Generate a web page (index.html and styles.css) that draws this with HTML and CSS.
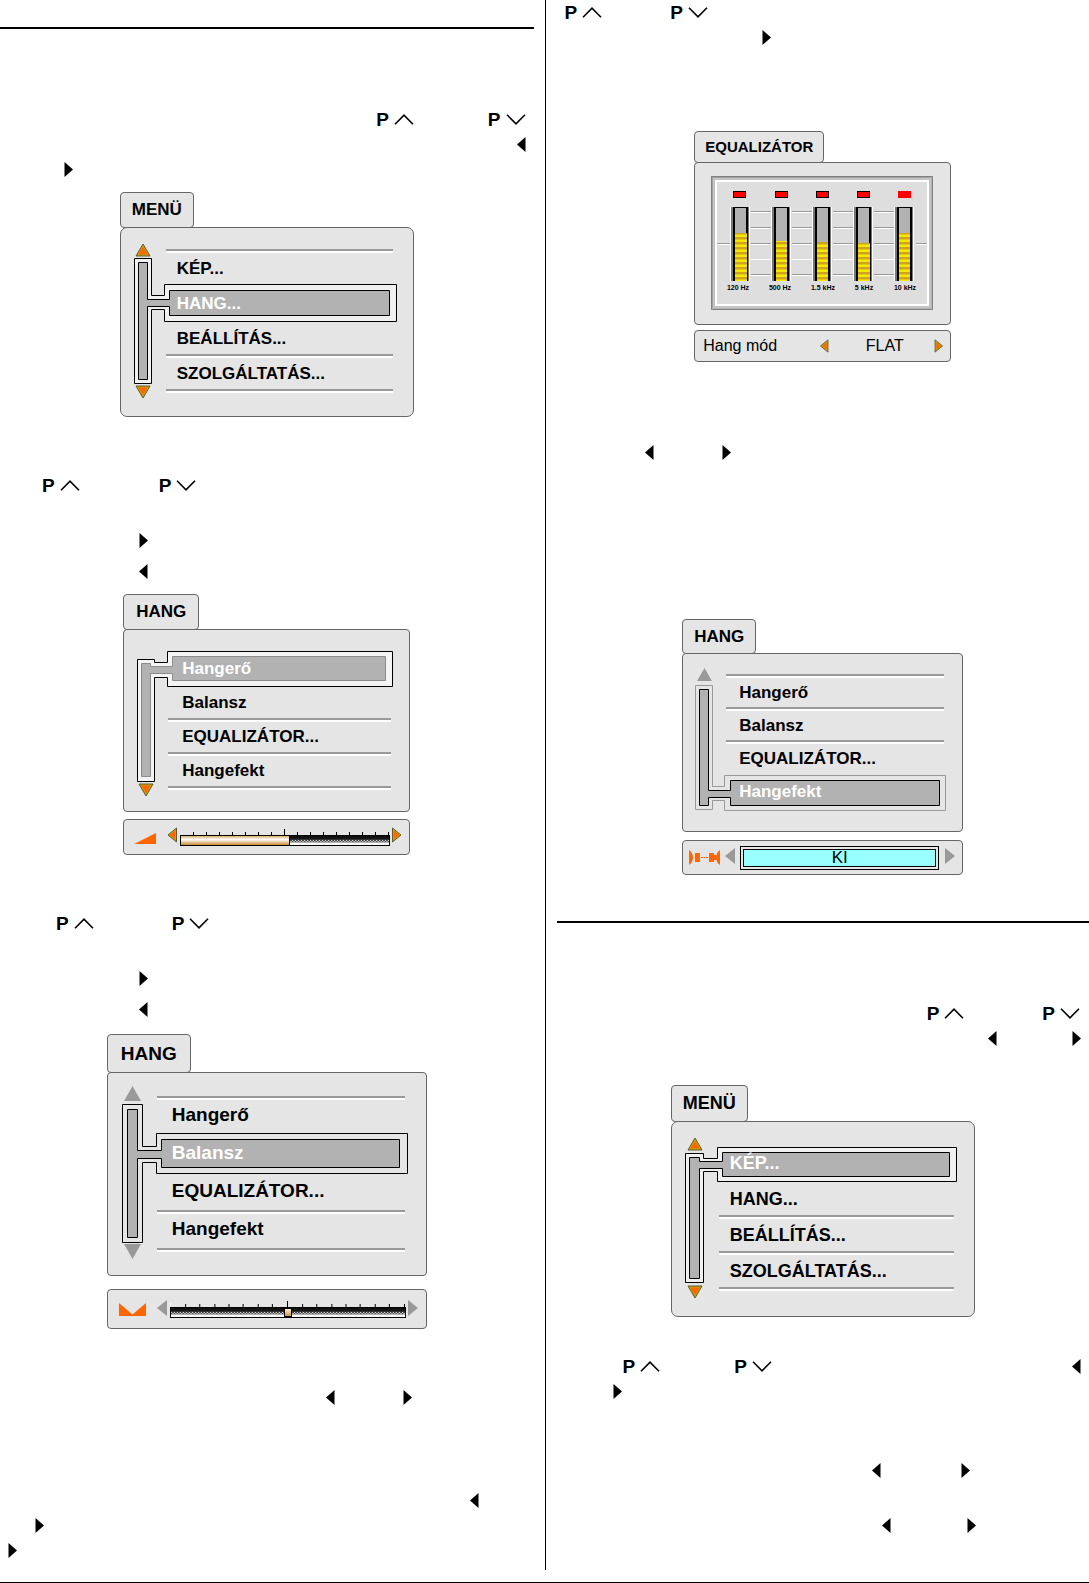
FILE: index.html
```html
<!DOCTYPE html>
<html lang="hu">
<head>
<meta charset="utf-8">
<meta name="viewport" content="width=device-width, initial-scale=1">
<title>Hang menü</title>
<link rel="stylesheet" href="styles.css">
</head>
<body>
<svg class="defs" aria-hidden="true">
  <defs>
    <symbol id="chev-up" viewBox="0 0 20 11"><path d="M1 10.300 10 1.200 19 10.300" fill="none" stroke="#000" stroke-width="1.600"/></symbol>
    <symbol id="chev-down" viewBox="0 0 20 11"><path d="M1 .8 10 9.800 19 .8" fill="none" stroke="#000" stroke-width="1.600"/></symbol>
    <symbol id="key-left" viewBox="0 0 9 15"><path d="M8.500 0V15L0 7.500Z"/></symbol>
    <symbol id="key-right" viewBox="0 0 9 15"><path d="M.5 0V15L9 7.500Z"/></symbol>
    <symbol id="up-on" viewBox="0 0 16 14"><path d="M8 1 15 13H1Z" fill="#cda000" stroke="#5c5c38"/><path d="M8 4 12.500 11.500H3.500Z" fill="#f60"/></symbol>
    <symbol id="down-on" viewBox="0 0 16 14"><path d="M8 13 15 1H1Z" fill="#cda000" stroke="#5c5c38"/><path d="M8 10 12.500 2.500H3.500Z" fill="#f60"/></symbol>
    <symbol id="up-off" viewBox="0 0 16 14"><path d="M8 0 16 14H0Z" fill="#999"/></symbol>
    <symbol id="down-off" viewBox="0 0 16 14"><path d="M8 14 16 0H0Z" fill="#999"/></symbol>
    <symbol id="left-on" viewBox="0 0 10 16"><path d="M9.500 1V15L1 8Z" fill="#cda000" stroke="#5c5c38"/><path d="M8 4V12L3 8Z" fill="#f60"/></symbol>
    <symbol id="right-on" viewBox="0 0 10 16"><path d="M.5 1V15L9 8Z" fill="#cda000" stroke="#5c5c38"/><path d="M2 4V12L7 8Z" fill="#f60"/></symbol>
    <symbol id="left-off" viewBox="0 0 10 16"><path d="M10 0V16L0 8Z" fill="#999"/></symbol>
    <symbol id="right-off" viewBox="0 0 10 16"><path d="M0 0V16L10 8Z" fill="#999"/></symbol>
    <pattern id="stripes" width="12" height="5" patternUnits="userSpaceOnUse">
      <rect width="12" height="5" fill="#f4ea00"/><rect width="12" height="2" fill="#d2a21c"/><rect y="2" width="12" height="1" fill="#e3c810"/>
    </pattern>
    <g id="meter">
      <rect x="-3" width="20" height="74" fill="#fff"/>
      <rect x="-2" width="18" height="74" fill="#777"/>
      <rect width="15" height="74" fill="#000"/>
      <rect x="2" y="1" width="11" height="73" fill="#b2b2b2"/>
    </g>
    <g id="steps">
      <path d="M0 .5H20M0 16.500H20M0 32.500H20M0 63.500H20" stroke="#999"/>
      <path d="M0 1.500H20M0 17.500H20M0 33.500H20M0 48.500H20M0 64.500H20" stroke="#fff"/>
    </g>
  </defs>
</svg>

<main class="page">
  <section class="column column--left">
    <hr class="rule rule--top">

    <div class="line line--end line--sound-menu space-xl">
      <span class="key"><b>P</b><svg><use href="#chev-up"/></svg></span>
      <span class="key"><b>P</b><svg><use href="#chev-down"/></svg></span>
    </div>
    <div class="line line--end"><svg class="tri"><use href="#key-left"/></svg></div>
    <div class="line line--sound-open"><svg class="tri"><use href="#key-right"/></svg></div>

    <figure class="osd osd--menu">
      <figcaption class="tab">MENÜ</figcaption>
      <div class="panel">
        <svg class="rail" viewBox="1 1 292 188">
          <path d="M14.500 31.500H31.500V68.500H44.500V57.500H276.500V94.500H44.500V82.500H31.500V156.500H14.500Z" fill="#f0f0f0" stroke="#000"/>
          <path d="M18.500 35.500H27.500V72.500H49.500V63.500H269.500V88.500H49.500V79.500H27.500V152.500H18.500Z" fill="#b2b2b2" stroke="#000"/>
          <use href="#up-on" x="15" y="16" width="16" height="14"/>
          <use href="#down-on" x="15" y="158" width="16" height="14"/>
        </svg>
        <ul class="items">
          <li><button>KÉP...</button></li>
          <li class="selected"><button>HANG...</button></li>
          <li><button>BEÁLLÍTÁS...</button></li>
          <li><button>SZOLGÁLTATÁS...</button></li>
        </ul>
      </div>
    </figure>

    <div class="line line--volume space-l">
      <span class="key"><b>P</b><svg><use href="#chev-up"/></svg></span>
      <span class="key"><b>P</b><svg><use href="#chev-down"/></svg></span>
    </div>
    <div class="line line--step space-m"><svg class="tri"><use href="#key-right"/></svg></div>
    <div class="line line--step space-s"><svg class="tri"><use href="#key-left"/></svg></div>

    <figure class="osd osd--volume">
      <figcaption class="tab">HANG</figcaption>
      <div class="panel">
        <svg class="rail" viewBox="1 1 285 181">
          <path d="M14.500 30.500H31.500V33.500H44.500V22.500H269.500V57.500H44.500V48.500H31.500V152.500H14.500Z" fill="#f4f4f4" stroke="#000"/>
          <path d="M18.500 34.500H27.500V37.500H49.500V27.500H262.500V51.500H49.500V44.500H27.500V147.500H18.500Z" fill="#b2b2b2" stroke="#8c8c8c"/>
          <use href="#down-on" x="15" y="154" width="16" height="14"/>
        </svg>
        <ul class="items">
          <li class="selected"><button>Hangerő</button></li>
          <li><button>Balansz</button></li>
          <li><button>EQUALIZÁTOR...</button></li>
          <li><button>Hangefekt</button></li>
        </ul>
      </div>
      <div class="bar">
        <svg class="glyph" width="23" height="16" viewBox="0 0 23 16"><path d="M0 15 22 4V15Z" fill="#f60"/></svg>
        <button class="arrow" aria-label="Halkabb"><svg><use href="#left-on"/></svg></button>
        <div class="scale">
          <svg class="ticks" viewBox="0 0 210 6" preserveAspectRatio="none"><path d="M13.500 3V6M26.500 3V6M39.500 3V6M52.500 3V6M65.500 3V6M78.500 3V6M91.500 3V6M104.500 0V6M117.500 3V6M130.500 3V6M143.500 3V6M156.500 3V6M169.500 3V6M182.500 3V6M195.500 3V6M208.500 3V6" stroke="#000"/></svg>
          <input class="level level--fill" type="range" min="0" max="100" value="52" aria-label="Hangerő">
        </div>
        <button class="arrow" aria-label="Hangosabb"><svg><use href="#right-on"/></svg></button>
      </div>
    </figure>

    <div class="line line--balance space-l">
      <span class="key"><b>P</b><svg><use href="#chev-up"/></svg></span>
      <span class="key"><b>P</b><svg><use href="#chev-down"/></svg></span>
    </div>
    <div class="line line--step space-m"><svg class="tri"><use href="#key-right"/></svg></div>
    <div class="line line--step space-s"><svg class="tri"><use href="#key-left"/></svg></div>

    <figure class="osd osd--balance">
      <figcaption class="tab">HANG</figcaption>
      <div class="panel">
        <svg class="rail" viewBox="1 1 318 202">
          <path d="M15.500 32.500H35.500V74.500H49.500V61.500H300.500V101.500H49.500V90.500H35.500V170.500H15.500Z" fill="none" stroke="#000"/>
          <path d="M20.500 37.500H30.500V78.500H54.500V67.500H292.500V95.500H54.500V86.500H30.500V165.500H20.500Z" fill="#b2b2b2" stroke="#000"/>
          <use href="#up-off" x="17" y="14" width="17" height="15"/>
          <use href="#down-off" x="17" y="172" width="17" height="15"/>
        </svg>
        <ul class="items">
          <li><button>Hangerő</button></li>
          <li class="selected"><button>Balansz</button></li>
          <li><button>EQUALIZÁTOR...</button></li>
          <li><button>Hangefekt</button></li>
        </ul>
      </div>
      <div class="bar">
        <svg class="glyph" width="28" height="16" viewBox="0 0 28 16"><path d="M0 2 13.500 13.500 27 2V15H0Z" fill="#f60"/></svg>
        <button class="arrow" aria-label="Balra"><svg><use href="#left-off"/></svg></button>
        <div class="scale">
          <svg class="ticks" viewBox="0 0 234 6" preserveAspectRatio="none"><path d="M.5 2V6" stroke="#fff"/><path d="M15.500 3V6M29.500 3V6M44.500 3V6M58.500 3V6M72.500 3V6M87.500 3V6M101.500 3V6M116.500 0V6M131.500 3V6M145.500 3V6M160.500 3V6M174.500 3V6M188.500 3V6M203.500 3V6M217.500 3V6M232.500 3V6" stroke="#000"/></svg>
          <input class="level level--knob" type="range" min="0" max="100" value="50" aria-label="Balansz">
        </div>
        <button class="arrow" aria-label="Jobbra"><svg><use href="#right-off"/></svg></button>
      </div>
    </figure>

    <div class="line line--mode space-l">
      <svg class="tri"><use href="#key-left"/></svg>
      <svg class="tri"><use href="#key-right"/></svg>
    </div>
    <div class="line line--end line--band space-xl"><svg class="tri"><use href="#key-left"/></svg></div>
    <div class="line line--band-next"><svg class="tri"><use href="#key-right"/></svg></div>
    <div class="line line--band-last"><svg class="tri"><use href="#key-right"/></svg></div>
  </section>

  <section class="column column--right">
    <div class="line line--equalizer">
      <span class="key"><b>P</b><svg><use href="#chev-up"/></svg></span>
      <span class="key"><b>P</b><svg><use href="#chev-down"/></svg></span>
    </div>
    <div class="line line--equalizer-open"><svg class="tri"><use href="#key-right"/></svg></div>

    <figure class="osd osd--equalizer">
      <figcaption class="tab">EQUALIZÁTOR</figcaption>
      <div class="panel">
        <svg class="chart" viewBox="17 14 222 134">
          <path d="M17 14H239L233 20H23V142L17 148Z" fill="#a2a2a2"/>
          <path d="M239 14V148H17L23 142H233V20Z" fill="#b4b4b4"/>
          <path d="M17.500 14.500H238.500V147.500H17.500Z" fill="none" stroke="#808080"/>
          <path d="M20 17H236V145H20Z" fill="none" stroke="#c4c4c4" stroke-width="2"/>
          <path d="M22 19H234V143H22Z" fill="#dedede" stroke="#fff" stroke-width="2"/>
          <path d="M23 81.500H36M222 81.500H233" stroke="#999"/>
          <path d="M23 82.500H36M222 82.500H233" stroke="#fff"/>
          <use href="#steps" x="57" y="49"/><use href="#steps" x="98" y="49"/><use href="#steps" x="139" y="49"/><use href="#steps" x="180" y="49"/>
          <g fill="red" stroke="#000">
            <rect x="39.500" y="29.500" width="12" height="6"/><rect x="81.500" y="29.500" width="12" height="6"/><rect x="122.500" y="29.500" width="12" height="6"/><rect x="163.500" y="29.500" width="12" height="6"/>
          </g>
          <rect x="204" y="29" width="13" height="7" fill="red"/>
          <use href="#meter" x="39" y="45"/><use href="#meter" x="80" y="45"/><use href="#meter" x="121" y="45"/><use href="#meter" x="162" y="45"/><use href="#meter" x="203" y="45"/>
          <g fill="url(#stripes)">
            <rect x="41" y="71" width="12" height="48"/><rect x="82" y="79" width="11" height="40"/><rect x="123" y="80" width="11" height="39"/><rect x="164" y="81" width="12" height="38"/><rect x="205" y="71" width="11" height="48"/>
          </g>
          <g class="bands">
            <text x="44" y="128">120 Hz</text><text x="86" y="128">500 Hz</text><text x="129" y="128">1.5 kHz</text><text x="170" y="128">5 kHz</text><text x="211" y="128">10 kHz</text>
          </g>
        </svg>
      </div>
      <div class="bar">
        <span class="bar-label">Hang mód</span>
        <button class="arrow" aria-label="Előző mód"><svg><use href="#left-on"/></svg></button>
        <output class="mode">FLAT</output>
        <button class="arrow" aria-label="Következő mód"><svg><use href="#right-on"/></svg></button>
      </div>
    </figure>

    <div class="line line--effect space-xl">
      <svg class="tri"><use href="#key-left"/></svg>
      <svg class="tri"><use href="#key-right"/></svg>
    </div>

    <figure class="osd osd--effect">
      <figcaption class="tab">HANG</figcaption>
      <div class="panel">
        <svg class="rail" viewBox="1 1 279 177">
          <path d="M13.500 32.500H30.500V133.500H42.500V122.500H263.500V157.500H42.500V147.500H30.500V156.500H13.500Z" fill="none" stroke="#999"/>
          <path d="M17.500 36.500H26.500V137.500H48.500V127.500H257.500V152.500H48.500V144.500H26.500V152.500H17.500Z" fill="#b2b2b2" stroke="#000"/>
          <use href="#up-off" x="15" y="15" width="15" height="13"/>
        </svg>
        <ul class="items">
          <li><button>Hangerő</button></li>
          <li><button>Balansz</button></li>
          <li><button>EQUALIZÁTOR...</button></li>
          <li class="selected"><button>Hangefekt</button></li>
        </ul>
      </div>
      <div class="bar">
        <svg class="glyph" width="31" height="15" viewBox="0 0 31 15"><path d="M0 0Q4 3 4 7.500T0 15ZM31 0Q27 3 27 7.500T31 15ZM6 3H11V12H6ZM20 3H25V12H20ZM12 7H14V8H12ZM15 7H16V8H15ZM17 7H19V8H17ZM25 5H27V10H25Z" fill="#f60"/></svg>
        <button class="arrow" aria-label="Előző"><svg><use href="#left-off"/></svg></button>
        <output class="state">KI</output>
        <button class="arrow" aria-label="Következő"><svg><use href="#right-off"/></svg></button>
      </div>
    </figure>

    <hr class="rule rule--section">

    <div class="line line--end line--service space-xl">
      <span class="key"><b>P</b><svg><use href="#chev-up"/></svg></span>
      <span class="key"><b>P</b><svg><use href="#chev-down"/></svg></span>
    </div>
    <div class="line line--end line--service-open">
      <svg class="tri"><use href="#key-left"/></svg>
      <svg class="tri"><use href="#key-right"/></svg>
    </div>

    <figure class="osd osd--picture">
      <figcaption class="tab">MENÜ</figcaption>
      <div class="panel">
        <svg class="rail" viewBox="1 1 302 194">
          <path d="M14.500 32.500H32.500V37.500H46.500V26.500H285.500V60.500H46.500V50.500H32.500V161.500H14.500Z" fill="#f0f0f0" stroke="#000"/>
          <path d="M18.500 36.500H28.500V40.500H51.500V31.500H278.500V55.500H51.500V47.500H28.500V157.500H18.500Z" fill="#b2b2b2" stroke="#000"/>
          <use href="#up-on" x="16" y="16" width="16" height="14"/>
          <use href="#down-on" x="16" y="164" width="16" height="14"/>
        </svg>
        <ul class="items">
          <li class="selected"><button>KÉP...</button></li>
          <li><button>HANG...</button></li>
          <li><button>BEÁLLÍTÁS...</button></li>
          <li><button>SZOLGÁLTATÁS...</button></li>
        </ul>
      </div>
    </figure>

    <div class="line line--picture">
      <span class="key"><b>P</b><svg><use href="#chev-up"/></svg></span>
      <span class="key"><b>P</b><svg><use href="#chev-down"/></svg></span>
      <svg class="tri tri--last"><use href="#key-left"/></svg>
    </div>
    <div class="line line--picture-open"><svg class="tri"><use href="#key-right"/></svg></div>
    <div class="line line--brightness">
      <svg class="tri"><use href="#key-left"/></svg>
      <svg class="tri"><use href="#key-right"/></svg>
    </div>
    <div class="line line--contrast space-m">
      <svg class="tri"><use href="#key-left"/></svg>
      <svg class="tri"><use href="#key-right"/></svg>
    </div>
  </section>
</main>
</body>
</html>
```

FILE: styles.css
```css
* { box-sizing: border-box; }

body {
  margin: 0;
  background: #fff;
  color: #000;
  font-family: "Liberation Sans", Arial, sans-serif;
  border-bottom: 1px solid #000;
}

.defs { position: absolute; width: 0; height: 0; }
svg { display: block; flex: none; }

/* The dividing line belongs to the left column, so that column takes the odd pixel */
.page {
  display: grid;
  grid-template-columns: calc(50% + 1px) 1fr;
  padding-bottom: 12px;
}

.column { min-width: 0; }
.column--left { padding: 0 11px 7px 0; border-right: 1px solid #000; }
.column--right { padding: 0 0 7px 11px; }

.rule { height: 2px; margin: 0; border: 0; background: #000; }
.rule--top { margin-top: 27px; }
.rule--section { margin-top: 46px; }

/* Remote-control keys */
.line { display: flex; align-items: center; height: 25px; }
.line--end { justify-content: flex-end; padding-right: 8px; }
.key { display: inline-flex; align-items: center; gap: 5px; flex: none; }
.key b { font-size: 19px; line-height: 25px; }
.key svg { width: 20px; height: 11px; }
.tri { width: 9px; height: 15px; }
.tri--last { margin-left: auto; }

.space-s { margin-top: 6px; }
.space-m { margin-top: 30px; }
.space-l { margin-top: 56px; }
.space-xl { margin-top: 78px; }

.line--sound-menu { gap: 74px; }
.line--sound-open { padding-left: 64px; }
.line--volume { padding-left: 42px; gap: 79px; }
.line--balance { padding-left: 56px; gap: 78px; }
.line--step { padding-left: 139px; }
.line--mode { padding-left: 326px; gap: 68px; }
.line--band { padding-right: 55px; }
.line--band-next { padding-left: 35px; }
.line--band-last { padding-left: 8px; }
.line--equalizer { padding-left: 8px; gap: 68px; }
.line--equalizer-open { padding-left: 205px; }
.line--effect { padding-left: 88px; gap: 68px; }
.line--service { gap: 78px; padding-right: 9px; }
.line--service-open { gap: 75px; }
.line--picture { padding: 0 8px 0 66px; gap: 74px; margin-top: 37px; }
.line--picture-open { padding-left: 56px; }
.line--brightness { padding-left: 315px; gap: 80px; margin-top: 54px; }
.line--contrast { padding-left: 325px; gap: 76px; }

/* On-screen menus */
.osd {
  display: flex;
  flex-direction: column;
  align-items: stretch;
  max-width: 100%;
  margin: 10px auto 0;
  font-size: 17px;
}
.osd button {
  margin: 0;
  padding: 0;
  border: 0;
  background: none;
  color: inherit;
  font: inherit;
}
.tab {
  align-self: flex-start;
  margin-bottom: -1px;
  padding: 0 11px;
  border: 1px solid #666;
  border-radius: 4px;
  background: #e5e5e5;
  font-weight: bold;
  line-height: 34px;
  text-align: center;
}
.panel,
.bar {
  position: relative;
  border: 1px solid #666;
  border-radius: 4px;
  background: #e5e5e5;
}
.rail { position: absolute; inset: 0; width: 100%; height: 100%; }

.items {
  position: relative;
  margin: 0;
  padding: 0;
  list-style: none;
  border-top: 2px solid #999;
  font-weight: bold;
}
.items::before {
  content: "";
  position: absolute;
  inset: 0 0 auto;
  height: 2px;
  background: #fff;
}
.items:has(li:first-child.selected) { border-color: transparent; }
.items:has(li:first-child.selected)::before { display: none; }
.items li {
  display: flex;
  align-items: center;
  height: 35px;
  padding-top: 2px;
  border-bottom: 2px solid #999;
  box-shadow: 0 2px 0 #fff;
}
.items li.selected,
.items li:has(+ .selected) { border-color: transparent; box-shadow: none; }
.items button { width: 100%; padding-left: 11px; text-align: left; }
.selected { color: #fff; }

.osd--menu { width: 294px; }
.osd--menu .panel { padding: 21px 20px 25px 45px; border-radius: 7px; }

.osd--volume { width: 287px; }
.osd--volume .tab { padding: 0 12px; }
.osd--volume .panel { padding: 20px 18px 23px 44px; }
.osd--volume li { height: 34px; }
.osd--volume li button { padding-left: 14px; }

.osd--balance { width: 320px; margin-top: 12px; font-size: 19px; }
.osd--balance .tab { padding: 0 13px; line-height: 37px; }
.osd--balance .panel { padding: 23px 21px 25px 49px; }
.osd--balance li { height: 38px; padding: 0 0 2px; }
.osd--balance li button { padding-left: 15px; }

.osd--equalizer { width: 257px; margin-top: 81px; font-size: 16px; }
.osd--equalizer .tab { padding: 0 10px; font-size: 15px; line-height: 30px; }
.osd--equalizer .panel { padding: 13px 17px 14px 16px; }

.osd--effect { width: 281px; margin-top: 154px; }
.osd--effect .tab { line-height: 33px; }
.osd--effect .panel { padding: 20px 18px 23px 43px; }
.osd--effect li { height: 33px; }
.osd--effect li button { padding-left: 13px; }

.osd--picture { width: 304px; margin-top: 34px; font-size: 18px; }
.osd--picture .tab { line-height: 35px; }
.osd--picture .panel { padding: 21px 20px 27px 47px; border-radius: 7px; }
.osd--picture li { height: 36px; }

/* Setting bar under a menu */
.bar { display: flex; align-items: center; height: 36px; margin-top: 7px; }
.arrow svg { width: 10px; height: 16px; }
.osd--volume .bar { padding: 0 7px 0 10px; }
.osd--volume .arrow { padding-bottom: 4px; }
.osd--volume .glyph { margin-right: 10px; }
.osd--balance .bar { height: 40px; margin-top: 13px; padding: 0 8px 0 11px; }
.osd--balance .arrow { padding-bottom: 3px; }
.osd--balance .glyph { margin-right: 10px; }
.osd--equalizer .bar { height: 32px; margin-top: 5px; padding: 0 6px 0 8px; }
.osd--equalizer .arrow svg { height: 14px; }
.osd--effect .bar { height: 35px; margin-top: 8px; padding: 0 7px 0 6px; }
.osd--effect .arrow { padding-bottom: 3px; }
.osd--effect .glyph { margin-right: 5px; }

.scale { flex: 1; min-width: 0; margin: 0 2px 0 3px; }
.ticks { width: 100%; height: 6px; }
.level {
  --dark: repeating-linear-gradient(90deg, #ddd 0 1px, #444 1px 3px) 0 4px / 100% 1px no-repeat,
          repeating-linear-gradient(90deg, #444 0 1px, #aaa 1px 3px) 0 5px / 100% 1px no-repeat,
          linear-gradient(#111 0 25%, #555 55%, #777 70%, #fff 75%);
  appearance: none;
  display: block;
  width: 100%;
  height: 11px;
  margin: 0;
  border: 1px solid #000;
  background: var(--dark);
}
.level--fill {
  background: linear-gradient(#d9b070, #fff 40%, #c88a30) 0 0 / 52% 100% no-repeat, var(--dark);
}
.level::-webkit-slider-thumb {
  appearance: none;
  width: 1px;
  height: 9px;
  background: #000;
}
.level--knob::-webkit-slider-thumb {
  width: 8px;
  border: 1px solid #000;
  background: linear-gradient(#fff0d0, #c89850);
}

.bar-label { flex: none; width: 116px; }
.mode { flex: 1; padding-left: 6px; text-align: center; }

.state {
  flex: 1;
  margin: 0 6px 0 5px;
  border: 1px solid #000;
  background: #9ff;
  box-shadow: inset 0 0 0 2px #e5e5e5, inset 0 0 0 3px #000;
  line-height: 22px;
  text-align: center;
}

.chart { width: 100%; height: auto; }
.bands text {
  font: bold 7px "Liberation Sans", sans-serif;
  text-anchor: middle;
}
```
